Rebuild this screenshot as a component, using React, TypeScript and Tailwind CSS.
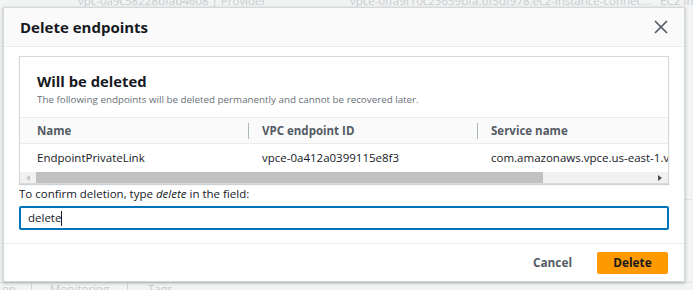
import { X } from "lucide-react";

const font = { fontFamily: '"Open Sans", "Liberation Sans", sans-serif' };

// --- Faded page behind the modal ---
function BackgroundPage() {
  return (
    <div className="flex h-full w-full flex-col text-[#c9cccf]">
      <div className="flex h-[7px] shrink-0 items-end overflow-hidden text-[11.5px] leading-[12px]">
        <span className="ml-[78px] w-[272px] shrink-0 whitespace-nowrap">vpc-0a9c58228bfab4608 | Provider</span>
        <span className="w-[310px] shrink-0 whitespace-nowrap">
          vpce-0ffa9f10c23659bfa.bf5df978.ec2-instance-connec...
        </span>
        <span className="whitespace-nowrap">EC2 In</span>
      </div>
      <div className="flex flex-1 flex-col items-end pt-[192px]">
        <div className="w-[12px] border-t border-[#e1e4e4]" />
      </div>
      <div className="flex h-[8px] shrink-0 items-start overflow-hidden border-t border-[#e1e4e4] text-[11.5px] leading-[12px]">
        <span className="w-[32px] whitespace-nowrap border-r border-[#d5d8d8] pl-[2px]">on</span>
        <span className="w-[96px] whitespace-nowrap border-r border-[#d5d8d8] pl-[18px]">Monitoring</span>
        <span className="whitespace-nowrap pl-[20px]">Tags</span>
      </div>
    </div>
  );
}

function TableCard() {
  return (
    <div className="overflow-hidden border border-[#d5dbdb] bg-white shadow-[0_1px_1px_rgba(0,28,36,0.2)]">
      <div className="h-[60px] px-[17px] pt-[13px]">
        <h2 className="text-[14.8px] font-bold leading-[22px] text-[#16191f]">Will be deleted</h2>
        <p className="whitespace-nowrap text-[9.8px] leading-[15px] text-[#687078]">
          The following endpoints will be deleted permanently and cannot be recovered later.
        </p>
      </div>
      <div className="flex h-[27px] items-center border-y border-[#eaeded] bg-[#fafafa] text-[11.5px] font-bold text-[#545b64]">
        <div className="w-[228px] shrink-0 pl-[17px]">Name</div>
        <div className="flex h-[16px] w-[229px] shrink-0 items-center border-l border-[#aab7b8] pl-[13px]">
          VPC endpoint ID
        </div>
        <div className="flex h-[16px] w-[229px] shrink-0 items-center whitespace-nowrap border-l border-[#aab7b8] pl-[13px]">
          Service name
        </div>
      </div>
      <div className="flex h-[28px] items-center whitespace-nowrap text-[11.5px] text-[#16191f]">
        <div className="w-[228px] shrink-0 pl-[17px]">EndpointPrivateLink</div>
        <div className="w-[229px] shrink-0 pl-[14px]">vpce-0a412a0399115e8f3</div>
        <div className="w-[260px] shrink-0 pl-[14px]">com.amazonaws.vpce.us-east-1.vpce-svc-0a1b2c3d</div>
      </div>
      {/* horizontal scrollbar */}
      <div className="flex h-[11px] items-center bg-[#f1f1f1]">
        <div className="flex w-[16px] shrink-0 justify-center">
          <div className="h-0 w-0 border-y-[3px] border-r-[4px] border-y-transparent border-r-[#c4c4c4]" />
        </div>
        <div className="h-[11px] w-[507px] shrink-0 bg-[#c1c1c1]" />
        <div className="flex-1" />
        <div className="flex w-[16px] shrink-0 justify-center">
          <div className="h-0 w-0 border-y-[3px] border-l-[4px] border-y-transparent border-l-[#505050]" />
        </div>
      </div>
    </div>
  );
}

function DeleteModal() {
  return (
    <div className="flex h-full flex-col border border-[#d5dbdb] bg-white shadow-[0_1px_3px_rgba(0,28,36,0.3)]">
      <div className="flex h-[39px] shrink-0 items-center justify-between border-b border-[#eaeded] bg-[#fafafa] pl-[16px] pr-[12px]">
        <h1 className="text-[15px] font-bold text-[#16191f]">Delete endpoints</h1>
        <X size={22} strokeWidth={1.9} className="text-[#545b64]" />
      </div>

      <div className="flex flex-col px-[15px] pt-[9px]">
        <TableCard />
        <label className="mt-[2px] text-[11.5px] leading-[16px] text-[#16191f]">
          To confirm deletion, type <i>delete</i> in the field:
        </label>
        <div className="mt-[4px] flex h-[24px] items-center rounded-[2px] border-2 border-[#0073bb] pl-[7px] text-[11.5px] text-[#16191f]">
          delete
          <span className="h-[15px] w-[1px] bg-[#16191f]" />
        </div>
      </div>

      <div className="mt-[13px] flex flex-1 items-center justify-end gap-[25px] border-t border-[#eaeded] pr-[16px]">
        <button className="text-[11.8px] font-bold text-[#545b64]">Cancel</button>
        <button className="flex h-[22px] w-[71px] items-center justify-center rounded-[2px] bg-[#ff9900] text-[11.8px] font-bold text-[#16191f]">
          Delete
        </button>
      </div>
    </div>
  );
}

export default function App() {
  return (
    <div style={font} className="relative h-[290px] w-[693px] overflow-hidden bg-[#f2f3f3]">
      <BackgroundPage />
      <div className="absolute left-[3px] top-[7px] h-[275px] w-[682px]">
        <DeleteModal />
      </div>
    </div>
  );
}
